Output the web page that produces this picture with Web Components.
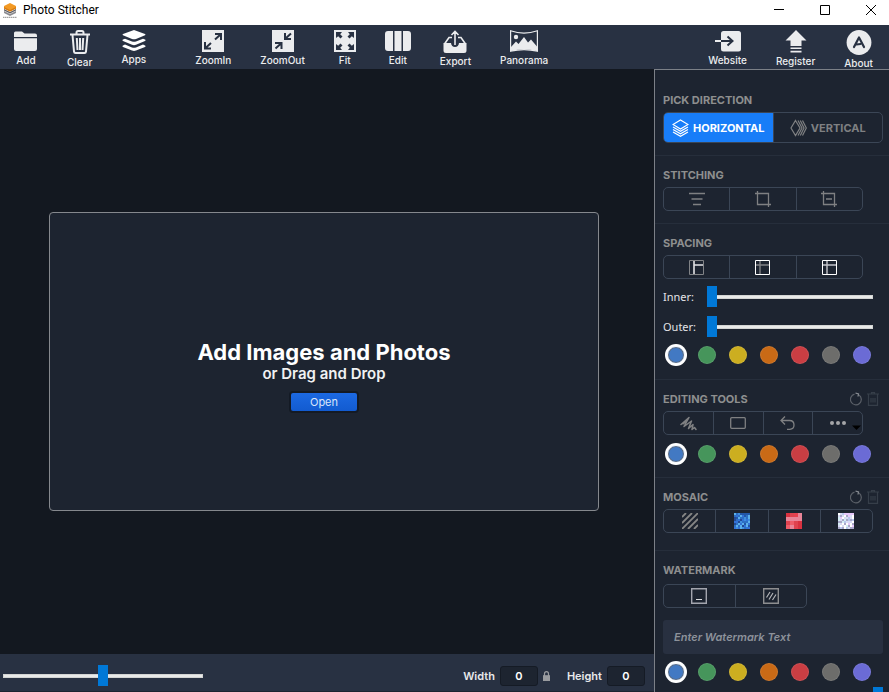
<!DOCTYPE html>
<html lang="en">
<head>
<meta charset="utf-8">
<title>Photo Stitcher</title>
<style>
  html, body { margin: 0; height: 100%; }
  body {
    overflow: hidden;
    background: #131820;
    font-family: Inter, "Liberation Sans", sans-serif;
    --panel: #1d2430;
    --bar: #283142;
    --line: #3b4656;
    --muted: #8e8f8f;
    --accent: #0078d7;
  }
</style>
</head>
<body>
<stitcher-app></stitcher-app>

<template id="app-tpl">
  <style>
    :host { display: flex; flex-direction: column; height: 100vh; }
    .tools { display: flex; align-items: flex-start; gap: 29px; box-sizing: border-box; height: 44px; padding: 5px 16px 0 14px; background: var(--bar); color: #ebecee; }
    .tools .gap { margin-left: 20px; }
    .tools .push { margin-left: auto; }
    .body { display: flex; flex: 1; min-height: 0; }
    main { display: flex; flex-direction: column; flex: 1; min-width: 0; }
    .canvas { display: flex; flex: 1; padding: 143px 55px 143px 49px; background: #131820; }
    drop-zone { flex: 1; }
    aside { box-sizing: border-box; width: 235px; padding-top: 11px; overflow: hidden; background: var(--panel); border: solid #7c8087; border-width: 1px 0 0 1px; }
    footer { display: flex; align-items: center; box-sizing: border-box; height: 38px; padding: 6px 9px 0 3px; background: var(--bar); border-bottom: 1px solid var(--panel); }
    footer range-slider { width: 200px; }
    footer .push { margin-left: auto; }
    footer .lock { margin: 0 17px 0 5px; }
    svg { display: block; }
    .watermark { display: block; box-sizing: border-box; width: 100%; height: 34px; margin: 8px 0 3px; padding: 0 11px; border: 0; border-radius: 3px; background: #283040; color: #8d929b; font: italic 600 11px/16px Inter, sans-serif; }
    .watermark::placeholder { color: #8d929b; opacity: 1; }
    .dim { color: #7f8082; }
    .sliders { display: flex; flex-direction: column; gap: 9px; width: 210px; }
    .sliders.wide { width: 220px; }
  </style>
  <title-bar>Photo Stitcher</title-bar>
  <nav class="tools" aria-label="Tools">
    <tool-button label="Add"><svg width="24" height="22" viewBox="0 0 24 22" fill="currentColor"><path d="M0 7V3Q0 1.500 1.500 1.500H8L10.500 3.500H21Q23 3.500 23 5.500V7zM0 8.200H23V19Q23 21 21 21H2Q0 21 0 19z"/></svg></tool-button>
    <tool-button label="Clear"><svg width="22" height="24" viewBox="0 0 22 24" fill="none" stroke="currentColor" stroke-width="2"><path d="M1 4.500H21M7.500 4V2.500Q7.500 1 9 1H13Q14.500 1 14.500 2.500V4M3.500 5L5 21.500Q5.200 23 6.500 23H15.500Q16.800 23 17 21.500L18.500 5M7.800 8L8.500 20M11 8V20M14.200 8L13.500 20"/></svg></tool-button>
    <tool-button label="Apps"><svg width="24" height="21" viewBox="0 0 24 21" fill="#fff"><path d="M12 0L23 4Q24 4.500 23 5.200L14 9Q12 9.700 10 9L1 5.200Q0 4.500 1 4z"/><path d="M1 9.500L3 8.700 10 11.500Q12 12.200 14 11.500L21 8.700 23 9.500Q24 10.200 23 11L14 14.800Q12 15.500 10 14.800L1 11Q0 10.200 1 9.500zM1 15.500L3 14.600 10 17.400Q12 18 14 17.400L21 14.600 23 15.500Q24 16.200 23 17L14 20.600Q12 21.300 10 20.600L1 17Q0 16.200 1 15.500z"/></svg></tool-button>
    <tool-button class="gap" label="ZoomIn"><svg width="22" height="22" viewBox="0 0 22 22"><path fill="currentColor" d="M0 0H22V22H0z"/><path fill="none" stroke="#283142" stroke-width="2" d="M13 4H19V10M18.500 4.500L13 9.500M3 12V18.500H9M3.500 18L9 13"/></svg></tool-button>
    <tool-button label="ZoomOut"><svg width="22" height="22" viewBox="0 0 22 22"><path fill="currentColor" d="M0 0H22V22H0z"/><path fill="none" stroke="#283142" stroke-width="2" d="M13 3V9H19M13.500 8.500L19 3.500M3 13H9.500V19M9 13.500L3.500 18.500"/></svg></tool-button>
    <tool-button label="Fit"><svg width="22" height="22" viewBox="0 0 22 22"><path fill="currentColor" d="M0 0H22V22H0z"/><path fill="#283142" d="M2 2H8L6.200 4.200 8.500 6.500 6.500 8.500 4.200 6.200 2 8zM20 2V8L17.800 6.200 15.500 8.500 13.500 6.500 15.800 4.200 14 2zM2 20V14L4.200 15.800 6.500 13.500 8.500 15.500 6.200 17.800 8 20zM20 20H14L15.800 17.800 13.500 15.500 15.500 13.500 17.800 15.800 20 14z"/></svg></tool-button>
    <tool-button label="Edit"><svg width="26" height="22" viewBox="0 0 26 22" fill="currentColor"><path d="M3 1H8V21H3Q0 21 0 18V4Q0 1 3 1zM9.500 1H16.500V21H9.500zM18 1H23Q26 1 26 4V18Q26 21 23 21H18z"/></svg></tool-button>
    <tool-button label="Export"><svg width="24" height="23" viewBox="0 0 24 23"><path fill="none" stroke="currentColor" stroke-width="1.600" d="M9 7.500H6L1.500 14M15 7.500H18L22.500 14M12 15V1.500M8.500 5L12 1.500 15.500 5"/><path fill="currentColor" d="M.5 13H8Q8.500 17 12 17T16 13H23.500V20.500Q23.500 23 21 23H3Q.5 23 .5 20.500z"/></svg></tool-button>
    <tool-button label="Panorama"><svg width="28" height="22" viewBox="0 0 28 22"><path fill="none" stroke="currentColor" stroke-width="1.200" d="M.6.8Q14 5.500 27.400.8V21.200Q14 18 .6 21.200z"/><circle cx="6" cy="7" r="2.200" fill="currentColor"/><path fill="currentColor" d="M1 17L6 11.500 8.500 14 14 7 18 12.500 21 9.500 27 16.500V21Q14 17.500 1 21z"/></svg></tool-button>
    <tool-button class="push" label="Website"><svg width="28" height="22" viewBox="0 0 28 22"><rect x="7" y="1" width="20" height="20.500" rx="2.500" fill="currentColor"/><path stroke="currentColor" stroke-width="2" d="M1 11H8"/><path fill="none" stroke="#283142" stroke-width="2" d="M7 11H18M13.500 6.500L18.500 11 13.500 15.500"/></svg></tool-button>
    <tool-button label="Register"><svg width="22" height="23" viewBox="0 0 22 23" fill="currentColor"><path d="M11 0L21.500 10.500H16.500V16H5.500V10.500H.5zM5.500 17.500H16.500V19H5.500zM5.500 20.800H16.500V22.500H5.500z"/></svg></tool-button>
    <tool-button label="About"><svg width="26" height="25" viewBox="0 0 26 25"><circle cx="13" cy="12.500" r="12.400" fill="currentColor"/><path fill="none" stroke="#283142" stroke-width="2.200" stroke-linejoin="round" stroke-linecap="round" d="M8 17L13 7.500 18 17M10.500 14.500L14.500 14"/></svg></tool-button>
  </nav>
  <div class="body">
    <main>
      <div class="canvas"><drop-zone></drop-zone></div>
      <footer>
        <range-slider name="Zoom" value="50"></range-slider>
        <size-field class="push" label="Width"></size-field>
        <svg class="lock" width="7" height="10" viewBox="0 0 7 10"><path fill="none" stroke="#999b9f" stroke-width="1.200" d="M1.500 5V2.800Q1.500.7 3.500.7T5.500 2.800V5"/><path fill="#999b9f" d="M0 4.200H7V10H0z"/></svg>
        <size-field label="Height"></size-field>
      </footer>
    </main>
    <aside>
      <panel-section heading="PICK DIRECTION">
        <button-group style="--w:220px;--h:31px">
          <seg-button active name="Horizontal"><svg width="17" height="18" viewBox="0 0 17 18" fill="none" stroke="currentColor" stroke-width="1.200"><path d="M8.500 1L16 5.500 8.500 10 1 5.500zM1 8L8.500 12.300 16 8M1 10.500L8.500 14.800 16 10.500M1 13L8.500 17.300 16 13"/></svg>HORIZONTAL</seg-button>
          <seg-button class="dim" name="Vertical"><svg width="17" height="18" viewBox="0 0 17 18" fill="none" stroke="currentColor" stroke-width="1.200"><path d="M5.500 1.500L10 9 5.500 16.500 1 9zM8 1.500L12 9 8 16.500M10.300 1.500L14 9 10.300 16.500M12.500 1.500L16.300 9 12.500 16.500"/></svg>VERTICAL</seg-button>
        </button-group>
      </panel-section>
      <panel-section heading="STITCHING">
        <button-group>
          <seg-button class="dim" name="Align"><svg width="16" height="14" viewBox="0 0 16 14" stroke="currentColor" stroke-width="1.300"><path d="M0 1.500H16M2.500 7H13.500M4 12.500H12"/></svg></seg-button>
          <seg-button class="dim" name="Crop"><svg width="16" height="16" viewBox="0 0 16 16" fill="none" stroke="currentColor" stroke-width="1.300"><path d="M0 2.500H13.500V16M2.500 0V13.500H16"/></svg></seg-button>
          <seg-button class="dim" name="Crop out"><svg width="16" height="16" viewBox="0 0 16 16" fill="none" stroke="currentColor" stroke-width="1.300"><path d="M0 2.500H13.500V16M2.500 0V13.500H16M5 8H11"/></svg></seg-button>
        </button-group>
      </panel-section>
      <panel-section heading="SPACING" style="--gap:7px;--bottom:13px">
        <button-group>
          <seg-button name="Inner spacing"><svg width="15" height="15" viewBox="0 0 15 15" fill="none"><path stroke="#818386" d="M.5.5H14.500V14.500H.5z"/><path stroke="#e4e4e6" stroke-width="1.600" d="M5 1V14M5 5H14"/></svg></seg-button>
          <seg-button name="Outer spacing"><svg width="15" height="15" viewBox="0 0 15 15" fill="none"><path stroke="#818386" stroke-width="1.400" d="M5 1V14M1 5H14"/><path stroke="#fff" d="M.5.5H14.500V14.500H.5z"/></svg></seg-button>
          <seg-button name="All spacing"><svg width="15" height="15" viewBox="0 0 15 15" fill="none"><path stroke="#c4c5cb" stroke-width="1.400" d="M5 1V14M1 5H14"/><path stroke="#fff" d="M.5.5H14.500V14.500H.5z"/></svg></seg-button>
        </button-group>
        <div class="sliders">
          <range-slider label="Inner:" value="0"></range-slider>
          <range-slider label="Outer:" value="0"></range-slider>
        </div>
        <color-swatches name="Spacing color"></color-swatches>
      </panel-section>
      <panel-section heading="EDITING TOOLS" actions>
        <button-group>
          <seg-button class="dim" name="Draw"><svg width="17" height="15" viewBox="0 0 17 15" fill="none" stroke="currentColor" stroke-width="1.500" stroke-linejoin="round" stroke-linecap="round"><path d="M1 8.500L9 1.500 4 10.500 11.500 5 8.500 12.500 13 8.500 12 13.500 14.500 11.500 16 13.500M3 7.800L7 4.500"/></svg></seg-button>
          <seg-button class="dim" name="Rectangle"><svg width="16" height="12" viewBox="0 0 16 12" fill="none" stroke="currentColor" stroke-width="1.300"><rect x=".7" y=".7" width="14.600" height="10.600" rx="1"/></svg></seg-button>
          <seg-button class="dim" name="Undo"><svg width="15" height="14" viewBox="0 0 15 14" fill="none" stroke="currentColor" stroke-width="1.300"><path d="M5 .5L1 4.500 5 8.500M1 4.500H9.500Q14 4.500 14 9T9.500 13.300H7"/></svg></seg-button>
          <seg-button name="More"><svg width="48" height="16" viewBox="0 0 48 16"><g fill="#a5a6a8"><circle cx="18" cy="8" r="2"/><circle cx="24" cy="8" r="2"/><circle cx="30" cy="8" r="2"/></g><path d="M38 10.500H47L42.500 15z"/></svg></seg-button>
        </button-group>
        <color-swatches name="Drawing color"></color-swatches>
      </panel-section>
      <panel-section heading="MOSAIC" actions style="--bottom:17px">
        <button-group style="--w:210px">
          <seg-button name="Stripes"><svg width="16" height="16" viewBox="0 0 16 16" stroke="#858685" stroke-width="1.800"><path d="M0 4L4 0M0 10L10 0M0 16L16 0M6 16L16 6M12 16L16 12"/></svg></seg-button>
          <seg-button name="Blue mosaic"><mosaic-tile cell="2" palette="#2d6fc4,#3f8fe0,#2257a8,#5cb0ea,#3272d8,#244a94"></mosaic-tile></seg-button>
          <seg-button name="Red mosaic"><mosaic-tile cell="4" palette="#e0434f,#e84150,#e98598,#d93240,#ee5c68,#b82d35"></mosaic-tile></seg-button>
          <seg-button name="Glitter mosaic"><mosaic-tile cell="2" palette="#d9dcf5,#b9c8ee,#e7c8fb,#ffffff,#a9a8c9,#d5eef5"></mosaic-tile></seg-button>
        </button-group>
      </panel-section>
      <panel-section heading="WATERMARK" style="--head:6px;--gap:4px">
        <button-group style="--w:144px">
          <seg-button name="Single watermark"><svg width="16" height="16" viewBox="0 0 16 16" fill="none"><path stroke="#a3a5ae" stroke-width="1.400" d="M.7.7H15.300V15.300H.7z"/><path stroke="#dcdde0" stroke-width="1.200" d="M5 11.500H11"/></svg></seg-button>
          <seg-button name="Tiled watermark"><svg width="16" height="16" viewBox="0 0 16 16" fill="none"><path stroke="#8d8e90" stroke-width="1.400" d="M.7.7H15.300V15.300H.7z"/><path stroke="#b4b5b8" stroke-width="1.200" d="M3.500 9.500L7 4M6 11.500L10 5M9.500 12L13 6.500"/></svg></seg-button>
        </button-group>
        <input class="watermark" aria-label="Watermark text" placeholder="Enter Watermark Text">
        <color-swatches name="Watermark color"></color-swatches>
        <div class="sliders wide"><range-slider name="Watermark opacity" indent value="100"></range-slider></div>
      </panel-section>
    </aside>
  </div>
</template>

<script>
const define = (name, html, setup) => customElements.define(name, class extends HTMLElement {
  connectedCallback() {
    if (this.shadowRoot) return;
    const root = this.attachShadow({ mode: 'open' });
    root.innerHTML = html;
    if (setup) setup(this, root);
  }
});

define('title-bar', `
  <style>
    :host { display: flex; align-items: center; box-sizing: border-box; height: 25px; padding: 0 7px 5px 3px; background: #fff; color: #000; font: 12px/16px Roboto, "Noto Sans", sans-serif; }
    svg { display: block; }
    .name { flex: 1; margin-left: 6px; }
    .controls { display: flex; gap: 24px; }
    button { display: grid; place-items: center; width: 22px; height: 18px; padding: 0; border: 0; background: none; color: #000; }
  </style>
  <svg width="14" height="15" viewBox="0 0 14 15"><path fill="#8c8c91" d="M1 8L7 11 13 8V10L7 13 1 10z"/><path fill="#5d5d64" d="M1 6L7 9 13 6V7.500L7 10.500 1 7.500z"/><path fill="#f39a24" d="M7 0L13 3V5.500L7 8.500 1 5.500V3z"/><path fill="#d67b12" d="M1 4L7 7 13 4V5.500L7 8.500 1 5.500z"/><path stroke="#8a8a8a" stroke-dasharray="1.500 .5" d="M0 14.300H14"/></svg>
  <span class="name"><slot></slot></span>
  <div class="controls">
    <button aria-label="Minimize"><svg width="10" height="10" stroke="currentColor"><path d="M0 4.500H10"/></svg></button>
    <button aria-label="Maximize"><svg width="10" height="10" stroke="currentColor" fill="none"><path d="M.5.5H9.500V9.500H.5z"/></svg></button>
    <button aria-label="Close"><svg width="10" height="10" stroke="currentColor"><path d="M0 0L10 10M10 0L0 10"/></svg></button>
  </div>`);

define('tool-button', `
  <style>
    :host { display: block; }
    button { display: flex; flex-direction: column; align-items: center; gap: 1px; padding: 0; border: 0; background: none; color: inherit; font: 500 10px/14px Inter, sans-serif; }
  </style>
  <button><slot></slot><span></span></button>`,
  (el, root) => { root.querySelector('span').textContent = el.getAttribute('label'); });

define('drop-zone', `
  <style>
    :host { display: flex; flex-direction: column; align-items: center; justify-content: center; box-sizing: border-box; padding-top: 28px; border: 1px solid #85888d; border-radius: 4px; background: var(--panel); color: #fff; }
    h1 { margin: 0; font-size: 22px; line-height: 26px; font-weight: 700; }
    p { margin: 0; font-size: 15px; line-height: 18px; font-weight: 600; color: #f0f1f2; }
    button { width: 70px; height: 22px; margin-top: 8px; padding: 0; border: 2px solid #141a24; border-radius: 4px; background: linear-gradient(#1c69e2, #125bd0); color: #dbe6fa; font: 11px/16px Inter, sans-serif; }
  </style>
  <h1>Add Images and Photos</h1>
  <p>or Drag and Drop</p>
  <button>Open</button>`);

define('range-slider', `
  <style>
    :host { display: flex; align-items: center; height: 21px; color: #e4e5e7; font: 11px/16px "Noto Sans", "Open Sans", sans-serif; }
    label { flex: none; width: 44px; }
    label:empty { display: none; }
    :host([indent]) label:empty { display: block; }
    input { appearance: none; flex: 1; min-width: 0; height: 21px; margin: 0; background: none; }
    input::-webkit-slider-runnable-track { height: 4px; box-shadow: inset 0 0 0 1px #d3d4d3; background: #e9eae9; }
    input::-webkit-slider-thumb { appearance: none; width: 10px; height: 21px; margin-top: -9px; background: var(--accent); }
  </style>
  <label for="r"></label><input id="r" type="range" min="0" max="100">`,
  (el, root) => {
    const input = root.querySelector('input');
    input.value = el.getAttribute('value');
    if (el.hasAttribute('name')) input.setAttribute('aria-label', el.getAttribute('name'));
    root.querySelector('label').textContent = el.getAttribute('label') || '';
  });

define('size-field', `
  <style>
    :host { display: flex; align-items: center; gap: 5px; color: #e8e9eb; font: 600 11px/16px Inter, sans-serif; }
    input { box-sizing: border-box; width: 38px; height: 20px; padding: 0; border: 1px solid #151b25; border-radius: 3px; background: var(--panel); color: #fff; font: inherit; text-align: center; }
  </style>
  <label for="v"></label><input id="v" value="0" inputmode="numeric">`,
  (el, root) => { root.querySelector('label').textContent = el.getAttribute('label'); });

define('panel-section', `
  <style>
    :host { display: block; padding: 11px 6px var(--bottom, 12px) 8px; border-bottom: 1px solid #262e3b; }
    header { display: flex; align-items: center; height: 16px; margin-bottom: var(--head, 4px); }
    h2 { flex: 1; margin: 0; color: var(--muted); font-size: 11px; line-height: 16px; font-weight: 700; }
    .actions { display: none; gap: 5px; margin-right: 4px; }
    :host([actions]) .actions { display: flex; }
    .actions button { padding: 0; border: 0; background: none; }
    svg { display: block; }
    .content { display: flex; flex-direction: column; align-items: flex-start; gap: var(--gap, 8px); }
    ::slotted(color-swatches) { align-self: stretch; }
  </style>
  <header><h2></h2>
    <div class="actions">
      <button aria-label="Reset"><svg width="12" height="14" viewBox="0 0 12 14" fill="none" stroke="#5b6068" stroke-width="1.200"><path d="M4.500 2.200A5.400 5.400 0 1 0 9 3"/><path stroke="#8a8e94" d="M5.500 1L8.500 2 8 4.500"/></svg></button>
      <button aria-label="Delete"><svg width="12" height="14" viewBox="0 0 12 14" fill="none" stroke="#363e49" stroke-width="1.200"><path d="M0 2H12M4.500 1.500V.6H7.500V1.500M1.500 2.500V13.300H10.500V2.500M4 6V10.500M6 6V10.500M8 6V10.500"/></svg></button>
    </div>
  </header>
  <div class="content"><slot></slot></div>`,
  (el, root) => { root.querySelector('h2').textContent = el.getAttribute('heading'); });

define('button-group', `
  <style>
    :host { display: flex; box-sizing: border-box; width: var(--w, 200px); height: var(--h, 24px); border: 1px solid var(--line); border-radius: 5px; overflow: hidden; }
    ::slotted(*) { flex: 1 1 0; min-width: 0; }
    ::slotted(:not(:last-child)) { border-right: 1px solid var(--line); }
  </style><slot></slot>`);

define('seg-button', `
  <style>
    :host { display: flex; box-sizing: border-box; }
    button { display: flex; flex: 1; align-items: center; justify-content: center; gap: 4px; min-width: 0; padding: 0; border: 0; background: none; color: inherit; font: 700 11px/16px Inter, sans-serif; }
    :host([active]) button { background: #187df8; color: #fff; }
    ::slotted(svg) { flex: none; }
  </style><button><slot></slot></button>`,
  (el, root) => { root.querySelector('button').setAttribute('aria-label', el.getAttribute('name')); });

define('color-swatches', `
  <style>
    :host { display: flex; align-items: center; gap: 13px; height: 22px; padding-left: 4px; }
    input { appearance: none; box-sizing: border-box; flex: none; width: 18px; height: 18px; margin: 0; border: 1px solid #ffffff18; border-radius: 50%; background: var(--c); }
    input:checked { border-color: #fff; box-shadow: 0 0 0 2px #fff, inset 0 0 0 1px #5d6c80; }
  </style>`,
  (el, root) => {
    const colors = { Blue: '#4279c3', Green: '#46955b', Yellow: '#ccae20', Orange: '#c96a16', Red: '#ca3e43', Gray: '#6d6d6b', Purple: '#6b6bd5' };
    for (const [name, color] of Object.entries(colors)) {
      const input = document.createElement('input');
      input.type = 'radio';
      input.name = 'color';
      input.checked = name === 'Blue';
      input.setAttribute('aria-label', `${el.getAttribute('name')}: ${name}`);
      input.style.setProperty('--c', color);
      root.append(input);
    }
  });

define('mosaic-tile', `
  <style>:host { display: block; width: 16px; height: 16px; } svg { display: block; }</style>
  <svg width="16" height="16" shape-rendering="crispEdges"></svg>`,
  (el, root) => {
    const palette = el.getAttribute('palette').split(',');
    const size = Number(el.getAttribute('cell'));
    let seed = 7, cells = '';
    for (let y = 0; y < 16; y += size) for (let x = 0; x < 16; x += size) {
      seed = (seed * 1103515245 + 12345) % 2147483648;
      cells += `<rect x="${x}" y="${y}" width="${size}" height="${size}" fill="${palette[(seed >> 12) % palette.length]}"/>`;
    }
    root.querySelector('svg').innerHTML = cells;
  });

customElements.define('stitcher-app', class extends HTMLElement {
  connectedCallback() {
    this.attachShadow({ mode: 'open' }).append(document.getElementById('app-tpl').content.cloneNode(true));
  }
});
</script>
</body>
</html>
